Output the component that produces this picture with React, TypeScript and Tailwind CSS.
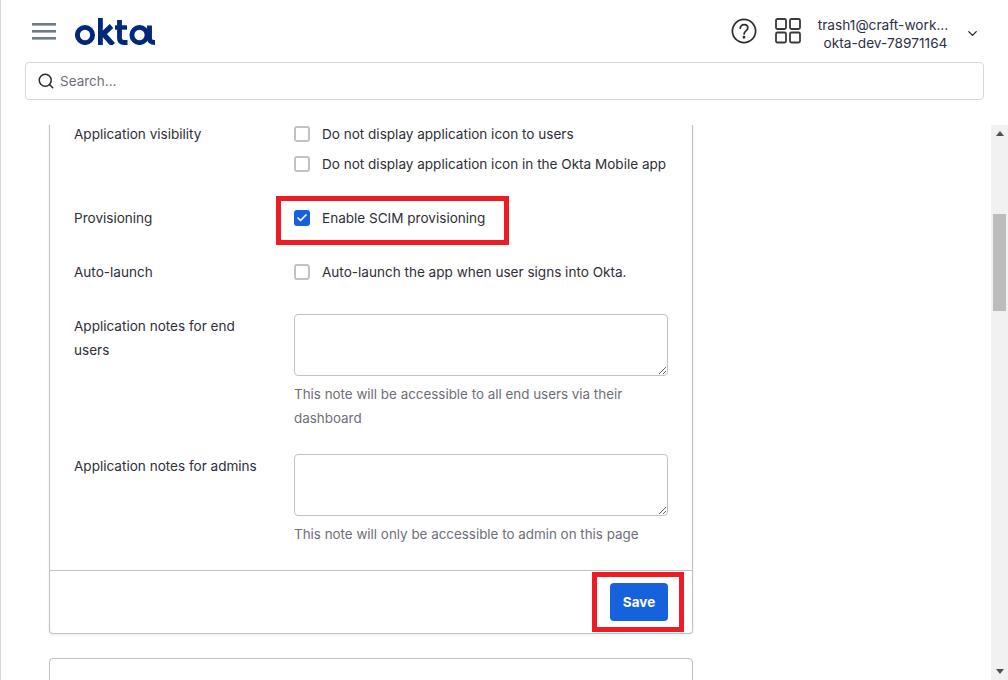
import type { ReactNode } from 'react'
import { Check, ChevronDown, Search } from 'lucide-react'

const font = "font-['Inter','Noto_Sans',sans-serif]"

const OktaLogo = () => (
  <svg width="81" height="28" viewBox="0 0 81 28" fill="none">
    <circle cx="10" cy="18" r="7.6" stroke="#00297a" strokeWidth="4.9" />
    <rect x="23" y="1" width="4.8" height="27" fill="#00297a" />
    <path d="M26.5 18.5 L36.5 9 M28 16.5 L38 27.8" stroke="#00297a" strokeWidth="5.2" />
    <path d="M44.5 3 V21 Q44.5 25.5 49 25.5 H52.5" stroke="#00297a" strokeWidth="4.8" />
    <path d="M40 10.5 H52" stroke="#00297a" strokeWidth="4.4" />
    <circle cx="64.5" cy="18" r="7.6" stroke="#00297a" strokeWidth="4.9" />
    <path d="M74.5 8.5 V21.5 Q74.5 25.5 80 25.5" stroke="#00297a" strokeWidth="4.9" />
  </svg>
)

const Header = () => (
  <header className="shrink-0">
    <div className="flex h-[62px] items-center pl-[31px] pr-[28px]">
      <svg width="24" height="18" viewBox="0 0 24 18" className="mr-[19px]">
        <rect y="1" width="24" height="2.6" fill="#6e7b85" />
        <rect y="8" width="24" height="2.6" fill="#6e7b85" />
        <rect y="15" width="24" height="2.6" fill="#6e7b85" />
      </svg>
      <OktaLogo />
      <div className="ml-auto flex items-center">
        <svg width="26" height="26" viewBox="0 0 26 26" fill="none" stroke="#2d2d2e" strokeWidth="1.7">
          <circle cx="13" cy="13" r="11.6" />
          <path d="M9.3 10.2c0-2.1 1.6-3.6 3.8-3.6s3.7 1.4 3.7 3.3c0 2.9-3.7 3-3.7 6" strokeLinecap="round" />
          <circle cx="13" cy="19.3" r="0.6" fill="#2d2d2e" />
        </svg>
        <svg width="26" height="26" viewBox="0 0 26 26" fill="none" stroke="#3a3a3c" strokeWidth="1.8" className="ml-[18px]">
          <rect x="1" y="1" width="10" height="10" rx="1.5" />
          <rect x="15" y="1" width="10" height="10" rx="1.5" />
          <rect x="1" y="14.5" width="10" height="10" rx="1.5" />
          <rect x="15" y="14.5" width="10" height="10" rx="1.5" />
        </svg>
        <div className="ml-[15px] mt-[5px] w-[134px] text-center text-[13.7px] leading-[18px] text-[#2f2f45]">
          <div>trash1@craft-work...</div>
          <div className="pl-[5px]">okta-dev-78971164</div>
        </div>
        <ChevronDown size={15} strokeWidth={2} className="ml-[15px] mt-[5px] text-[#222]" />
      </div>
    </div>
    <div className="ml-[24px] mr-[24px] flex h-[38px] items-center rounded-[4px] border border-[#d7d7dc] pl-[11px]">
      <Search size={18} strokeWidth={2} className="text-[#2d2d2e]" />
      <span className="ml-[5px] text-[13.5px] text-[#6e6e78]">Search...</span>
    </div>
  </header>
)

const CheckRow = ({ label, checked }: { label: string; checked?: boolean }) => (
  <div className="flex h-[24px] items-center">
    {checked ? (
      <span className="flex h-4 w-4 items-center justify-center rounded-[3px] bg-[#1662dd]">
        <Check size={12} strokeWidth={3.4} className="text-white" />
      </span>
    ) : (
      <span className="h-4 w-4 rounded-[3px] border-2 border-[#c1c1c8] bg-white" />
    )}
    <span className="ml-3 text-[13.55px] text-[#2f2f38]">{label}</span>
  </div>
)

const FormLabel = ({ children }: { children: ReactNode }) => (
  <div className="w-[220px] shrink-0 pr-[35px] text-[13.55px] leading-[24px] text-[#2f2f38]">{children}</div>
)

const Note = () => (
  <textarea className="block h-[62px] w-[374px] rounded-[4px] border border-[#c1c1c8] bg-white" />
)

const Scrollbar = () => (
  <div className="flex w-[17px] shrink-0 flex-col items-center bg-[#f1f1f1]">
    <svg width="8" height="5" viewBox="0 0 8 5" className="mt-[6px]">
      <path d="M4 0 L8 5 H0 Z" fill="#505050" />
    </svg>
    <div className="mt-[78px] h-[97px] w-[13px] bg-[#bcbcbc]" />
    <svg width="8" height="5" viewBox="0 0 8 5" className="mt-auto mb-[6px]">
      <path d="M4 5 L8 0 H0 Z" fill="#505050" />
    </svg>
  </div>
)

export default function App() {
  return (
    <div className={`flex h-[680px] w-[1008px] flex-col overflow-hidden border-l border-[#d8d8d8] bg-white ${font}`}>
      <Header />
      <div className="mt-[25px] flex min-h-0 flex-1">
        {/* scrolled content, top of the card is cut off */}
        <main className="min-w-0 flex-1 overflow-hidden pl-[48px]">
          <section className="-mt-[3px] w-[644px] rounded-b-[4px] border border-t-0 border-[#c1c1c8] shadow-[0_1px_3px_rgba(0,0,0,0.08)]">
            <div className="px-6">
              <div className="flex">
                <FormLabel>Application visibility</FormLabel>
                <div className="flex flex-col gap-[6px]">
                  <CheckRow label="Do not display application icon to users" />
                  <CheckRow label="Do not display application icon in the Okta Mobile app" />
                </div>
              </div>
              <div className="mt-[30px] flex">
                <FormLabel>Provisioning</FormLabel>
                <div className="relative">
                  <CheckRow checked label="Enable SCIM provisioning" />
                  <div className="absolute -top-[10px] -left-[18px] h-[49px] w-[233px] border-[5px] border-[#ed1c24]" />
                </div>
              </div>
              <div className="mt-[30px] flex">
                <FormLabel>Auto-launch</FormLabel>
                <CheckRow label="Auto-launch the app when user signs into Okta." />
              </div>
              <div className="mt-[30px] flex">
                <FormLabel>Application notes for end users</FormLabel>
                <div>
                  <Note />
                  <p className="mt-[6px] w-[340px] text-[13.4px] leading-[24px] text-[#6e6e78]">
                    This note will be accessible to all end users via their dashboard
                  </p>
                </div>
              </div>
              <div className="mt-[24px] flex">
                <FormLabel>Application notes for admins</FormLabel>
                <div>
                  <Note />
                  <p className="mt-[6px] text-[13.4px] leading-[24px] text-[#6e6e78]">
                    This note will only be accessible to admin on this page
                  </p>
                </div>
              </div>
            </div>
            <div className="relative mt-[24px] flex h-[63px] items-center justify-end border-t border-[#c1c1c8] pr-6">
              <button className="h-[38px] w-[58px] rounded-[4px] bg-[#1662dd] text-[13.5px] font-bold text-white">
                Save
              </button>
              <div className="absolute top-[1px] right-[8px] h-[60px] w-[92px] border-[5px] border-[#ed1c24]" />
            </div>
          </section>
          <section className="mt-[24px] h-[60px] w-[644px] rounded-t-[4px] border border-[#c1c1c8]" />
        </main>
        <Scrollbar />
      </div>
    </div>
  )
}
